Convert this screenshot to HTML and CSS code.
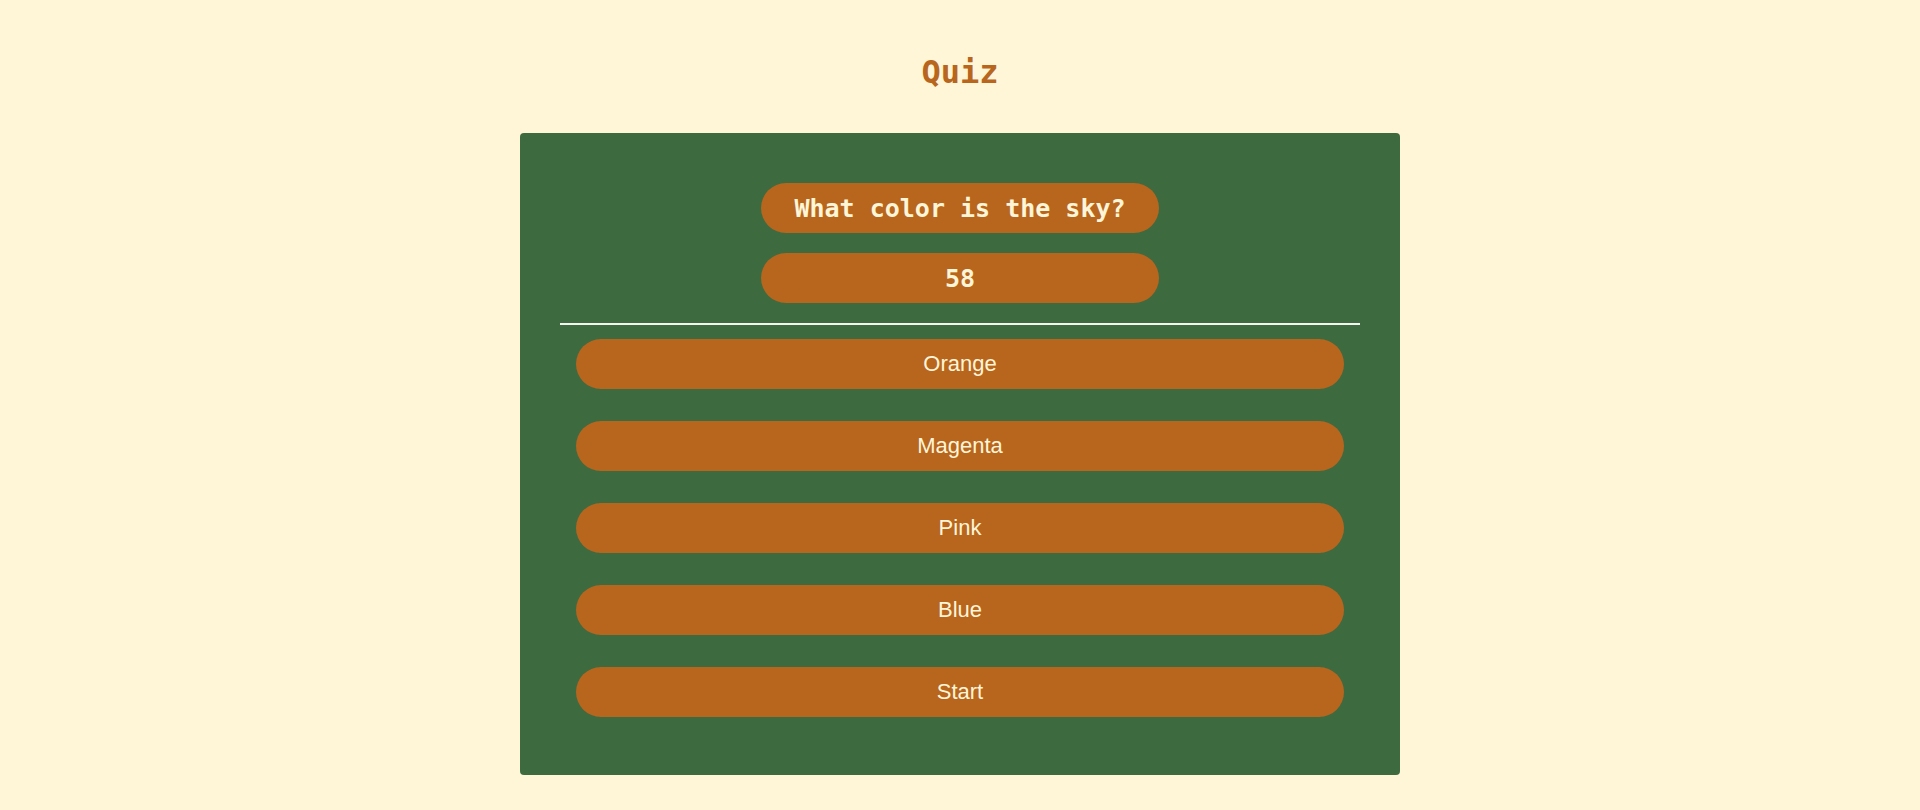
FILE: index.html
```html
<!DOCTYPE html>
<html lang="en">
<head>
<meta charset="utf-8">
<title>Quiz</title>
<link rel="stylesheet" href="styles.css">
</head>
<body>
<main class="page">
  <h1 class="title">Quiz</h1>
  <section class="panel">
    <div class="pill question">What color is the sky?</div>
    <div class="pill timer">58</div>
    <hr class="divider">
    <div class="answers">
      <button class="answer">Orange</button>
      <button class="answer">Magenta</button>
      <button class="answer">Pink</button>
      <button class="answer">Blue</button>
      <button class="answer">Start</button>
    </div>
  </section>
</main>
</body>
</html>
```
FILE: styles.css
```css
html, body {
  margin: 0;
  padding: 0;
  background: #fff5d7;
}

.page {
  display: flex;
  flex-direction: column;
  align-items: center;
  padding-top: 54px;
}

.title {
  margin: 0 0 42px;
  font-family: "DejaVu Sans Mono", monospace;
  font-weight: bold;
  font-size: 32px;
  line-height: 37px;
  color: #b8651e;
}

.panel {
  width: 880px;
  height: 642px;
  box-sizing: border-box;
  background: #3e6a40;
  border-radius: 4px;
  padding: 50px 40px 0;
  display: flex;
  flex-direction: column;
  align-items: center;
}

.pill {
  width: 398px;
  height: 50px;
  border-radius: 25px;
  background: #b8651e;
  color: #fff5d7;
  font-family: "DejaVu Sans Mono", monospace;
  font-weight: bold;
  font-size: 25px;
  display: flex;
  align-items: center;
  justify-content: center;
}

.timer {
  margin-top: 20px;
}

.divider {
  width: 800px;
  margin: 20px 0 14px;
  border: 0;
  border-top: 2px solid #f4f4f0;
  height: 0;
}

.answers {
  width: 768px;
  display: flex;
  flex-direction: column;
  gap: 32px;
}

.answer {
  height: 50px;
  border: 0;
  border-radius: 25px;
  background: #b8651e;
  color: #fff5d7;
  font-family: "Liberation Sans", Arial, sans-serif;
  font-size: 22px;
  padding: 0;
  cursor: pointer;
}
```
